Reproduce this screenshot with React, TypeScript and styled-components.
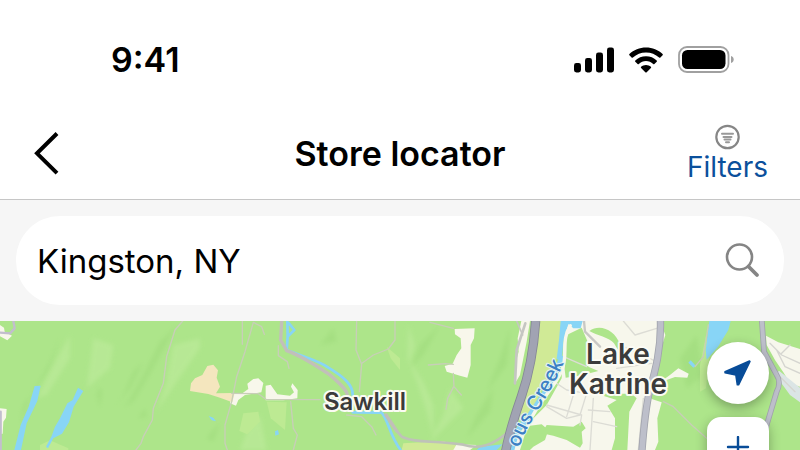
import React from "react";
import styled, { createGlobalStyle } from "styled-components";

const GlobalStyle = createGlobalStyle`
  *, *::before, *::after { box-sizing: border-box; }
  body {
    margin: 0;
    background: #ffffff;
    color: #000000;
    font-family: Inter, "Liberation Sans", sans-serif;
  }
`;

const Screen = styled.div`
  display: flex;
  flex-direction: column;
  height: 100vh;
  overflow: hidden;
`;

const StatusBar = styled.div`
  display: flex;
  flex: none;
  align-items: center;
  justify-content: space-between;
  padding: 40px 66px 28px 111px;
`;

const Clock = styled.time`
  font-size: 34px;
  line-height: 40px;
  font-weight: 600;
`;

const StatusIcons = styled.div`
  display: flex;
  align-items: center;
  gap: 15px;

  svg { display: block; }
`;

const Header = styled.header`
  display: grid;
  flex: none;
  grid-template-columns: 1fr auto 1fr;
  align-items: center;
  height: 92px;
  padding: 0 32px;
  border-bottom: 1px solid #c6c6c6;
`;

const PlainButton = styled.button`
  display: flex;
  align-items: center;
  justify-content: center;
  padding: 0;
  border: 0;
  background: none;
  color: inherit;
  font: inherit;
  cursor: pointer;

  svg { display: block; }
`;

const BackButton = styled(PlainButton)`
  justify-self: start;
`;

const Title = styled.h1`
  margin: 0;
  font-size: 34px;
  line-height: 40px;
  font-weight: 600;
`;

const FiltersButton = styled(PlainButton)`
  flex-direction: column;
  justify-self: end;
  color: #0b509c;
  font-size: 28px;
  line-height: 34px;
`;

const SearchArea = styled.div`
  flex: none;
  padding: 16px;
  background: #f6f6f6;
`;

const SearchForm = styled.form`
  display: flex;
  align-items: center;
  height: 89px;
  padding: 0 24px 0 21px;
  border-radius: 44px;
  background: #ffffff;
`;

const SearchInput = styled.input`
  flex: 1;
  min-width: 0;
  padding: 0;
  border: 0;
  outline: 0;
  background: none;
  color: #000000;
  font-family: inherit;
  font-size: 33px;
  line-height: 44px;
`;

const MapArea = styled.main`
  position: relative;
  flex: 1;
  min-height: 0;
  overflow: hidden;
  background: #ade68a;
`;

const MapDrawing = styled.svg`
  display: block;
  width: 100%;
  height: 100%;
`;

const MapControls = styled.div`
  position: absolute;
  top: 21px;
  right: 31px;
  display: flex;
  flex-direction: column;
  gap: 13px;
`;

const MapButton = styled(PlainButton)<{ $radius: number }>`
  width: 62px;
  height: 62px;
  border-radius: ${(p) => p.$radius}px;
  background: #ffffff;
  color: #084c98;
  box-shadow: 0 4px 12px rgba(0, 0, 0, 0.3);
`;

const PlaceLabel = styled.text<{ $size: number }>`
  font-size: ${(p) => p.$size}px;
  font-weight: 600;
  fill: #3b3b3b;
  stroke: #fbfbf4;
  stroke-width: 4px;
  stroke-linejoin: round;
  paint-order: stroke;
`;

const WaterLabel = styled.text`
  font-size: 20px;
  font-weight: 500;
  fill: #3c80c4;
  stroke: #e4f4f4;
  stroke-width: 2px;
  stroke-linejoin: round;
  paint-order: stroke;
`;

function SignalIcon() {
  return (
    <svg width="40" height="26" viewBox="0 0 40 26" aria-hidden="true">
      <rect x="0" y="16" width="7" height="9.500" rx="2.400" />
      <rect x="11" y="11" width="7" height="14.500" rx="2.400" />
      <rect x="22" y="5.500" width="7" height="20" rx="2.400" />
      <rect x="33" y="0.500" width="7" height="25" rx="2.400" />
    </svg>
  );
}

function WifiIcon() {
  return (
    <svg width="34" height="26" viewBox="0 0 34 26" aria-hidden="true">
      <path d="M17 .5C10.600.5 4.700 2.900.4 7c-.4.400-.4.900 0 1.300l2.200 2.200c.4.400.9.400 1.300 0C7.400 7.200 12 5.400 17 5.400s9.600 1.800 13.100 5.100c.4.400.9.400 1.300 0l2.200-2.200c.4-.4.400-.9 0-1.300C29.300 2.900 23.400.5 17 .5z" />
      <path d="M17 9.200c-4.100 0-7.900 1.500-10.700 4.200-.4.400-.4.900 0 1.300l2.300 2.300c.4.300.9.400 1.200 0 2-1.800 4.500-2.900 7.200-2.900s5.200 1.100 7.200 2.900c.3.400.8.300 1.200 0l2.300-2.300c.4-.4.400-.9 0-1.300C24.900 10.700 21.100 9.200 17 9.200z" />
      <path d="M17 17.900c-1.900 0-3.600.7-4.900 1.800-.4.400-.4.900 0 1.300l4.200 4.300c.4.400 1 .4 1.400 0l4.200-4.300c.4-.4.400-.9 0-1.300-1.300-1.100-3-1.800-4.900-1.800z" />
    </svg>
  );
}

function BatteryIcon() {
  return (
    <svg width="56" height="28" viewBox="0 0 56 28" aria-hidden="true">
      <rect x="1" y="1" width="49.500" height="25" rx="8" fill="none" stroke="#a0a0a0" strokeWidth="1.800" />
      <rect x="4" y="4" width="43.500" height="19" rx="5.500" />
      <path d="M53 10c1.700.5 2.700 1.900 2.700 3.500s-1 3-2.700 3.500z" fill="#a0a0a0" />
    </svg>
  );
}

function BackIcon() {
  return (
    <svg width="28" height="44" viewBox="0 0 28 44" fill="none" stroke="currentColor" strokeWidth="4" aria-hidden="true">
      <path d="M25 1.500 5 21.300l20 19.800" />
    </svg>
  );
}

function FilterIcon() {
  return (
    <svg width="26" height="27" viewBox="0 0 26 27" fill="none" strokeLinecap="round" aria-hidden="true">
      <circle cx="13.500" cy="14" r="11.200" stroke="#868686" strokeWidth="2.200" />
      <path d="M8 10.800h11M9.500 14h8M10.500 16.600h6M12 19.200h3" stroke="#999999" strokeWidth="2" />
    </svg>
  );
}

function SearchIcon() {
  return (
    <svg width="36" height="36" viewBox="0 0 36 36" fill="none" stroke="#858585" strokeLinecap="round" aria-hidden="true">
      <circle cx="15.500" cy="14" r="12.500" strokeWidth="2.600" />
      <path d="M24.500 23.500 33 32" strokeWidth="3.800" />
    </svg>
  );
}

function LocateIcon() {
  return (
    <svg width="30" height="30" viewBox="0 0 30 30" fill="currentColor" stroke="currentColor" strokeWidth="1.500" strokeLinejoin="round" aria-hidden="true">
      <path d="M26.500 3 2 13.700 2 14.700 12.800 17 14.300 26.800 15.600 26.800 27 3.500z" />
    </svg>
  );
}

function PlusIcon() {
  return (
    <svg width="24" height="24" viewBox="0 0 24 24" fill="none" stroke="currentColor" strokeWidth="2.400" strokeLinecap="round" aria-hidden="true">
      <path d="M12 1v20M2 11h20" />
    </svg>
  );
}

const hillshade = [
  "M180 60 150 140 100 230 70 270 60 330 90 250 150 160z",
  "M430 140 400 170 370 240 340 280 390 220z",
  "M530 30 480 80 430 180 380 270 400 260 460 160z",
  "M298 215 290 240 300 280 306 230z",
  "M435 280 415 310 440 305z",
  "M385 260 372 275 382 272z",
  "M1320 30 1260 90 1230 160 1270 120z",
  "M1480 220 1430 300 1400 370 1470 290z",
  "M1530 40 1500 130 1460 230 1520 150z",
  "M660 320 620 370 640 380z",
  "M1000 40 960 90 1010 80z",
  "M2090 60 2040 130 2060 220 2110 180z",
];

const lightHills = [
  "M210 60 160 150 110 250 140 240 210 130z",
  "M520 90 500 200 470 290 530 200 600 100 600 70z",
  "M280 70 340 90 330 160 260 220z",
  "M1225 30 1245 90 1230 140 1270 200 1300 270 1300 370 1280 290 1250 200 1222 130z",
  "M780 300 740 350 720 405 800 405z",
  "M1350 220 1330 300 1290 380 1390 280z",
];

const meadows = [
  "M730 295 775 290 780 320 742 358 718 348z",
  "M800 260 860 262 855 345 812 310z",
  "M1160 95 1200 130 1200 165 1172 130z",
  "M120 390 150 376 205 400 205 405 120 405z",
  "M2118 60 2128 120 2118 220 2100 230 2100 150z",
];

const settlements = [
  "M0 30 12 38 14 50 36 62 22 76 0 64z",
  "M0 280 20 282 18 308 10 320 8 356 0 358z",
  "M695 235 725 236 745 222 742 206 760 192 775 190 790 204 784 232 735 240 715 255 708 272 690 265z",
  "M797 212 812 209 832 238 870 242 882 232 873 215 877 205 893 225 892 250 850 256 797 256z",
  "M1764 42 1820 40z",
  "M1364 42 1424 40 1422 70 1412 90 1412 150 1402 188 1380 182 1360 176 1340 170 1334 153 1358 146 1370 120 1384 100 1382 70 1365 58z",
  "M1564 18 1590 18 1580 80 1560 180 1548 200 1545 150 1556 110 1553 70z",
  "M1370 388 1430 390 1410 405 1360 405z",
];

const townGreens = [
  "M1700 60 1745 38 1765 85 1765 155 1795 168 1740 182 1697 188 1690 130z",
  "M1768 48C1800 25 1845 45 1860 88L1856 108 1842 85C1828 66 1790 62 1768 48z",
  "M1574 360 1590 332 1625 328 1645 345 1635 375 1600 395 1590 405 1560 405z",
  "M1625 355 1640 330 1720 335 1745 320 1757 340 1745 350 1748 385 1740 398 1700 375 1660 362z",
  "M1790 236 1895 236 1910 250 1888 290 1882 405 1835 405 1845 370 1845 310 1822 272 1850 255z",
];

const localStreets = [
  "M1690 125 1760 155",
  "M1670 205 1700 225 1760 235 1740 300 1700 310 1640 275",
  "M1720 240 1700 305",
  "M1640 270 1745 300 1740 330",
  "M1870 18 1905 60 1970 40",
  "M1860 90 1970 140",
  "M1850 160 1955 145",
  "M1780 320 1850 335",
  "M1780 250 1770 405",
  "M1765 285 1830 290",
  "M1930 250 1915 405",
];

function MapPicture() {
  return (
    <MapDrawing viewBox="0 0 800 129" preserveAspectRatio="xMinYMin slice" role="img" aria-label="Map of Sawkill and Lake Katrine">
      <defs>
        <path id="creek-course" d="M512 148 C519 126 522 118 528 106 C538 90 552 68 562 46 L572 20" />
        <filter id="relief" x="-20%" y="-20%" width="140%" height="140%">
          <feGaussianBlur stdDeviation="6" />
        </filter>
      </defs>
      <g transform="scale(.333333) translate(0 -18)" fill="none" strokeLinejoin="round" strokeLinecap="round">
        <path d="M0 0H2400V900H0z" fill="#ade58a" />
        <g fill="#9bd878" opacity=".45" filter="url(#relief)">
          {hillshade.map((d) => <path key={d} d={d} />)}
        </g>
        <g fill="#bdeb9b" opacity=".65" filter="url(#relief)">
          {lightHills.map((d) => <path key={d} d={d} />)}
        </g>
        <g fill="#bdea93">
          {meadows.map((d) => <path key={d} d={d} />)}
        </g>
        <path d="M1620 18 1685 18 1680 110 1590 300 1550 320 1580 240 1600 130zM1210 385 1330 378 1380 395 1360 405H1205z" fill="#d0ea96" />

        <path d="M1700 18H1980L1996 60 1982 105 1952 235 1955 252 1985 262 1972 310 1975 380 1965 405H1520L1560 350 1640 270 1685 190 1690 90z" fill="#f7f7ec" />
        <path d="M1965 235 1975 205 2010 180 2035 160 2066 176 2062 188 2025 186 2000 195 1980 220z" fill="#f7f7ec" />
        <g fill="#f8f7eb">
          {settlements.map((d) => <path key={d} d={d} />)}
        </g>
        <path d="M570 228 573 205 585 190 607 180 622 153 640 149 654 166 650 188 660 215 648 235 704 234 697 262 660 248 625 237z" fill="#f4e6be" />

        <g fill="#ade58a">
          {townGreens.map((d) => <path key={d} d={d} />)}
        </g>

        <path d="M2298 62 2335 82 2400 102V215L2370 205 2350 172 2325 135 2300 90z" fill="#f7f7ec" />
        <path d="M2322 175 2338 168 2400 218V262L2370 240 2352 215z" fill="#dbe5e5" />
        <path d="M2310 85 2345 120 2400 145M2330 105 2355 155 2400 175M2345 115 2370 90M2340 185 2385 230" stroke="#d5d5d0" strokeWidth="4" />

        <g stroke="#dcdcd5" strokeWidth="4">
          {localStreets.map((d) => <path key={d} d={d} />)}
        </g>

        <g fill="#88d5f6">
          <path d="M104 213 122 212 112 258 80 325 63 405H43L62 330 86 275z" />
          <path d="M234 218 250 228 221 275 207 322 186 356 160 370 144 400 138 395 155 363 165 335 180 310 202 265 218 255z" />
          <path d="M626 303 640 308 648 319 635 316z" />
          <path d="M825 349 834 345 837 358 826 362z" />
          <path d="M2128 18H2192L2185 45 2154 95 2120 134 2117 105z" />
          <path d="M2065 143 2072 136 2087 152 2080 158z" />
          <path d="M1682 18H1748L1742 40 1720 40 1705 27 1690 80 1685 138 1670 132 1677 75z" />
          <path d="M1440 395 1508 388 1490 405H1430z" />
        </g>
        <path d="M1685 130 1650 210 1590 300 1550 350 1535 405" stroke="#88d5f6" strokeWidth="16" />
        <path d="M1711 32C1682 75 1705 120 1686 165 1668 210 1630 245 1598 302" stroke="#f8f7eb" strokeWidth="10" />

        <path d="M862 18 863 65 883 45 867 25M863 65 860 104C890 120 955 135 985 158 1030 185 1060 210 1058 241" stroke="#88d5f6" strokeWidth="8" />
        <path d="M1058 292 1145 293C1163 310 1170 365 1202 405" stroke="#88d5f6" strokeWidth="8" />

        <g stroke="#c8ceb8" strokeWidth="4">
          <path d="M548 18 525 45 500 125 490 205 460 280 457 315 430 365 423 385 408 405" />
          <path d="M727 18 727 88M760 22 735 110 710 185 695 260 675 330 675 385 682 405M760 22 785 35 793 58" />
          <path d="M695 235 775 236 798 253 960 254" />
          <path d="M835 92 835 122 862 140 867 160M872 260 880 340 892 360 880 405" />
          <path d="M1070 18 1068 105 1085 148 1078 230M1086 145 1120 120 1165 102 1185 75 1185 18M1040 300 1085 305 1115 335 1128 360" />
          <path d="M2125 30 2118 75 2110 125 2085 155M1990 260 2020 275 2075 330 2120 370" />
          <path d="M1360 148 1337 146 1285 150M1360 175 1362 215 1384 240M1361 215 1343 250 1338 283M1290 22 1360 40" />
        </g>

        <path d="M40 18 44 40 30 55 0 53M2 290V405" stroke="#c2becd" strokeWidth="7" />
        <path d="M845 18 842 75 860 107C910 125 960 160 990 180 1025 210 1040 225 1042 239M1158 300 1190 348" stroke="#c2bfba" strokeWidth="10" />
        <path d="M1190 348 1205 365C1250 385 1290 375 1390 389 1440 405 1480 390 1528 348" stroke="#bfc2b8" strokeWidth="8" />
        <path d="M1576 25 1550 105 1545 205" stroke="#c5c6c2" strokeWidth="8" />
        <path d="M1550 18 1568 60" stroke="#c5c6c2" strokeWidth="5" />

        <path d="M1607 18C1602 90 1592 165 1564 245 1543 305 1525 360 1515 420" stroke="#858795" strokeWidth="28" strokeLinecap="butt" />
        <path d="M1607 18C1602 90 1592 165 1564 245 1543 305 1525 360 1515 420" stroke="#a1a3b3" strokeWidth="23" strokeLinecap="butt" />
        <path d="M1981 10C1985 100 1965 170 1948 230 1935 290 1930 350 1925 420" stroke="#a1a3ad" strokeWidth="22" strokeLinecap="butt" />
        <path d="M1981 10C1985 100 1965 170 1948 230 1935 290 1930 350 1925 420" stroke="#bdbfca" strokeWidth="17" strokeLinecap="butt" />
        <path d="M2285 10 2292 110 2330 180C2340 195 2338 215 2330 230L2300 330 2285 420" stroke="#a1a3ad" strokeWidth="17" strokeLinecap="butt" />
        <path d="M2285 10 2292 110 2330 180C2340 195 2338 215 2330 230L2300 330 2285 420" stroke="#bdbfca" strokeWidth="12" strokeLinecap="butt" />
        <path d="M1752 18 1755 50 1800 95" stroke="#c8c8c5" strokeWidth="7" />
      </g>

      <WaterLabel>
        <textPath href="#creek-course" startOffset="22">ous</textPath>
      </WaterLabel>
      <WaterLabel>
        <textPath href="#creek-course" startOffset="62">Creek</textPath>
      </WaterLabel>
      <PlaceLabel $size={24} x="365" y="89" textAnchor="middle">Sawkill</PlaceLabel>
      <PlaceLabel $size={28} x="618" y="43" textAnchor="middle">Lake</PlaceLabel>
      <PlaceLabel $size={28} x="618" y="73" textAnchor="middle">Katrine</PlaceLabel>
    </MapDrawing>
  );
}

export default function App() {
  const [query, setQuery] = React.useState("Kingston, NY");

  return (
    <>
      <GlobalStyle />
      <Screen>
        <StatusBar>
          <Clock>9:41</Clock>
          <StatusIcons>
            <SignalIcon />
            <WifiIcon />
            <BatteryIcon />
          </StatusIcons>
        </StatusBar>
        <Header>
          <BackButton type="button" aria-label="Back">
            <BackIcon />
          </BackButton>
          <Title>Store locator</Title>
          <FiltersButton type="button">
            <FilterIcon />
            Filters
          </FiltersButton>
        </Header>
        <SearchArea>
          <SearchForm role="search" onSubmit={(e) => e.preventDefault()}>
            <SearchInput
              type="text"
              aria-label="City and state"
              value={query}
              onChange={(e) => setQuery(e.target.value)}
            />
            <PlainButton type="submit" aria-label="Search">
              <SearchIcon />
            </PlainButton>
          </SearchForm>
        </SearchArea>
        <MapArea>
          <MapPicture />
          <MapControls>
            <MapButton type="button" aria-label="My location" $radius={31}>
              <LocateIcon />
            </MapButton>
            <MapButton type="button" aria-label="Zoom in" $radius={14}>
              <PlusIcon />
            </MapButton>
          </MapControls>
        </MapArea>
      </Screen>
    </>
  );
}
